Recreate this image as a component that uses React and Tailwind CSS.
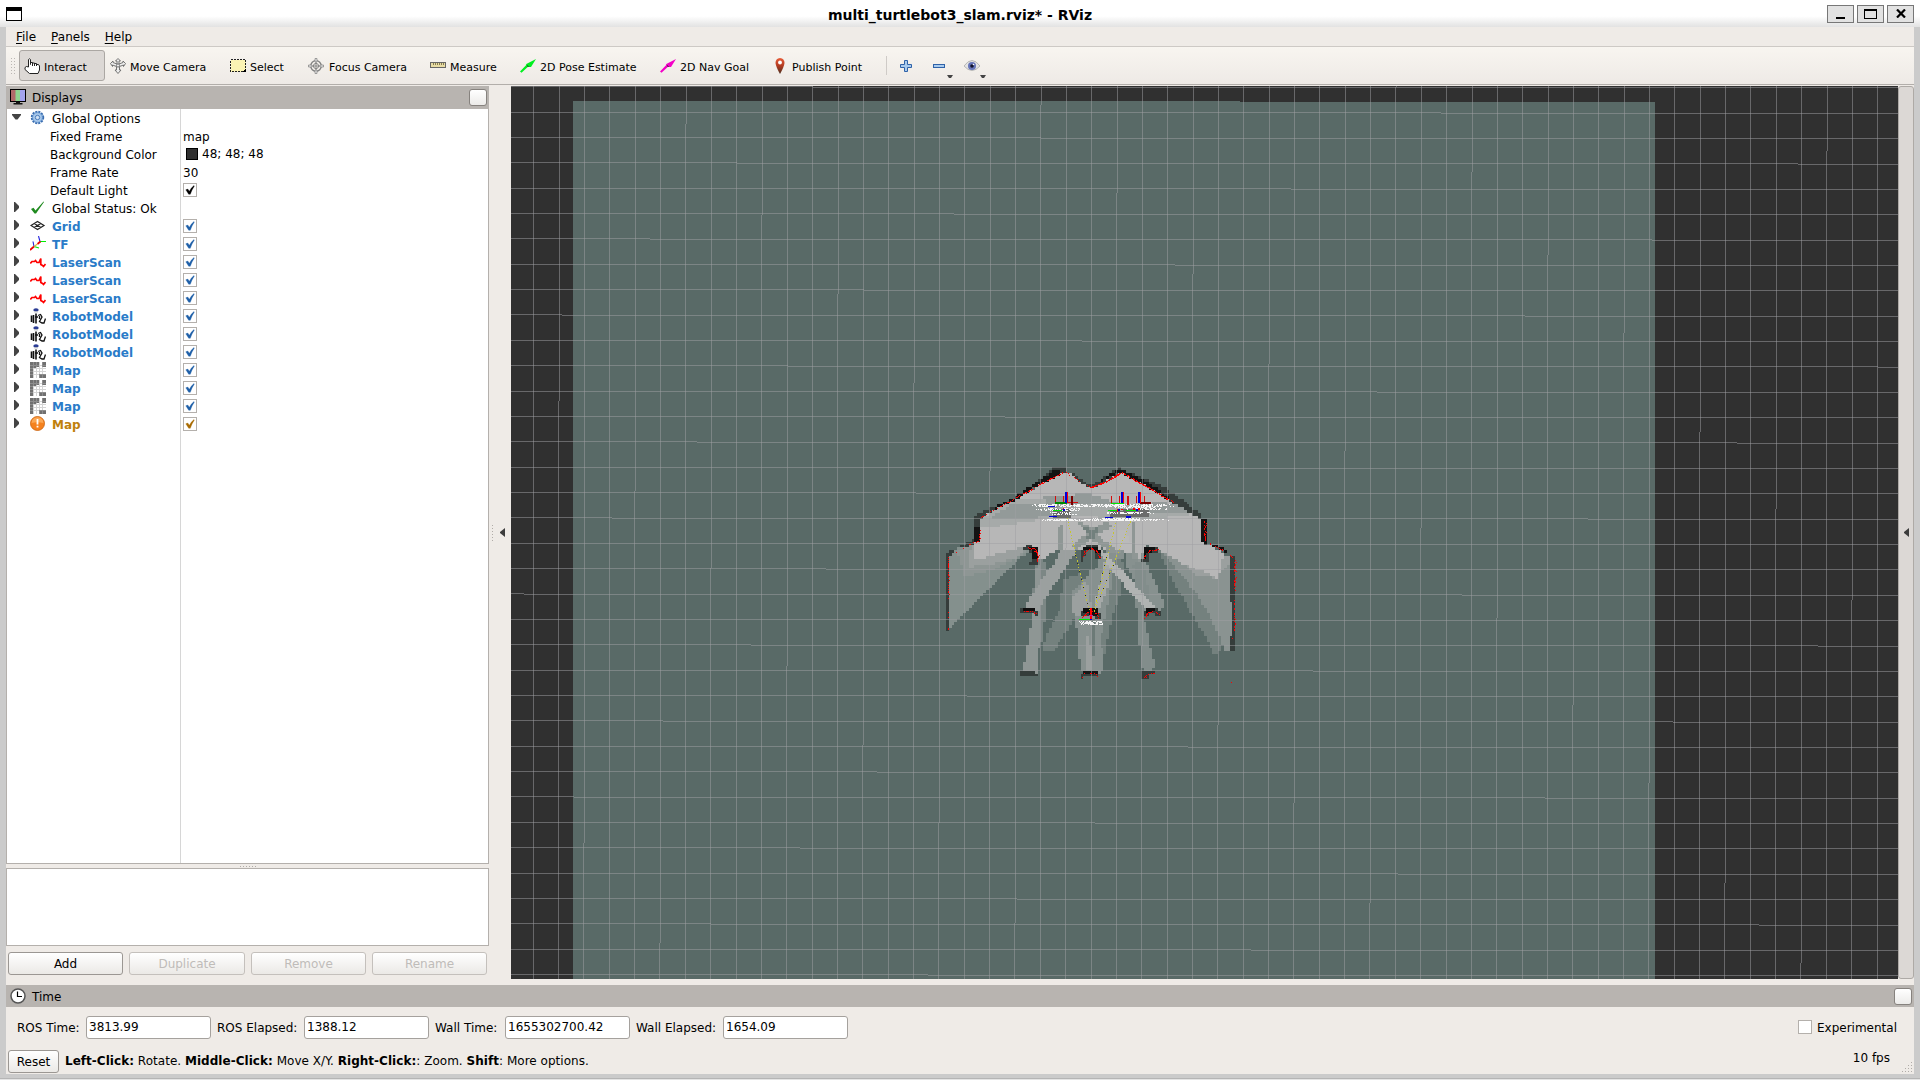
import React from "react";

/* ---------- scene geometry ---------- */

const CELL = 8.6;

function inside(px, py, pts) {
  let hit = false;
  for (let i = 0, j = pts.length - 2; i < pts.length; j = i, i += 2) {
    const xi = pts[i], yi = pts[i + 1], xj = pts[j], yj = pts[j + 1];
    if (yi > py !== yj > py && px < ((xj - xi) * (py - yi)) / (yj - yi) + xi) hit = !hit;
  }
  return hit;
}

// Occupancy cells covered by a polygon, merged into horizontal runs.
function cells(pts) {
  let d = "";
  for (let r = 0; r < 84; r++) {
    let start = -1;
    for (let c = 0; c < 120; c++) {
      const on = c < 119 && inside((c + 0.5) * CELL, (r + 0.5) * CELL, pts);
      if (on && start < 0) start = c;
      if (!on && start >= 0) {
        d += `M${(start * CELL).toFixed(1)} ${(r * CELL).toFixed(1)}h${((c - start) * CELL).toFixed(1)}v${CELL}h${(-(c - start) * CELL).toFixed(1)}z`;
        start = -1;
      }
    }
  }
  return d;
}

function rng(seed) {
  let s = seed * 7919 + 17;
  return () => {
    s = (s * 16807) % 2147483647;
    return s / 2147483647;
  };
}

// Laser hits scattered along a polyline.
function hits(pts, density, seed) {
  const rand = rng(seed);
  let d = "";
  for (let i = 0; i + 3 < pts.length; i += 2) {
    const dx = pts[i + 2] - pts[i], dy = pts[i + 3] - pts[i + 1];
    const n = Math.ceil(Math.hypot(dx, dy) / 3);
    for (let k = 0; k < n; k++) {
      const jitter = rand() < 0.25 ? 3 : 0;
      if (rand() > density) continue;
      const x = Math.round((pts[i] + (dx * k) / n) / 3) * 3 + jitter;
      const y = Math.round((pts[i + 1] + (dy * k) / n) / 3) * 3;
      d += `M${x} ${y}h3v3h-3z`;
    }
  }
  return d;
}

// Overlapping frame labels.
function scribble(x, y, w, h, density, seed) {
  const rand = rng(seed);
  let d = "";
  for (let yy = 0; yy < h; yy += 3)
    for (let xx = 0; xx < w; xx += 3) {
      const edge = Math.min(xx, w - xx) / 70;
      if (rand() < density * Math.min(1, 0.3 + edge)) d += `M${x + xx} ${y + yy}h3v3h-3z`;
    }
  return d;
}

const REGIONS = [
  ["#84908d", [85, 315, 108, 298, 165, 272, 345, 290, 300, 325, 240, 385, 160, 465, 100, 520, 85, 540]],
  ["#8e9694", [112, 305, 165, 275, 330, 290, 300, 320, 215, 362, 135, 382]],
  ["#9ba09f", [150, 300, 165, 275, 320, 292, 290, 322, 215, 342, 150, 350]],
  ["#74817e", [715, 300, 900, 300, 940, 420, 900, 600, 885, 616, 850, 550, 780, 430]],
  ["#8a9391", [730, 310, 940, 318, 940, 600, 915, 600, 890, 540, 830, 430]],
  ["#9ba09f", [760, 320, 905, 310, 940, 330, 915, 352, 890, 385, 830, 375]],
  ["#7c8785", [345, 330, 372, 320, 385, 400, 375, 500, 370, 570, 345, 600, 330, 560, 338, 440]],
  ["#8e9694", [345, 350, 362, 345, 368, 420, 360, 560, 350, 668, 308, 668, 330, 540, 340, 440]],
  ["#9ba09f", [435, 280, 470, 300, 440, 350, 392, 420, 350, 490, 310, 475, 345, 420, 400, 340]],
  ["#74817e", [430, 390, 480, 370, 500, 430, 455, 520, 400, 606, 366, 600, 385, 545, 420, 480]],
  ["#87918f", [455, 430, 500, 380, 560, 300, 610, 300, 600, 380, 568, 520, 545, 670, 480, 665, 470, 540]],
  ["#74817e", [590, 320, 615, 340, 600, 430, 572, 520, 548, 650, 545, 560, 570, 430]],
  ["#9ba09f", [460, 440, 500, 390, 515, 470, 500, 500, 475, 500, 458, 490]],
  ["#a5a9a8", [555, 330, 580, 320, 560, 430, 535, 480, 520, 470]],
  ["#9ba09f", [498, 640, 505, 530, 510, 530, 514, 660, 500, 660]],
  ["#6c7a77", [516, 510, 526, 510, 524, 600, 516, 650]],
  ["#87918f", [615, 280, 650, 280, 690, 360, 735, 470, 705, 490, 660, 420, 620, 350]],
  ["#828d8b", [640, 340, 668, 330, 690, 430, 672, 500, 706, 655, 668, 670, 655, 560]],
  ["#b0b3b2", [535, 300, 560, 310, 650, 410, 708, 475, 690, 482, 655, 458, 590, 380]],
  ["#b7b7b7", [180, 205, 300, 140, 430, 62, 445, 68, 515, 118, 595, 66, 612, 70, 845, 205, 848, 272, 910, 312, 895, 385, 790, 342, 715, 300, 680, 285, 655, 335, 640, 305, 560, 300, 515, 285, 470, 300, 415, 300, 360, 332, 345, 290, 310, 292, 165, 330, 160, 280, 180, 272]],
  ["#a6aaa9", [180, 235, 180, 205, 290, 148, 520, 148, 590, 165, 770, 165, 820, 192, 720, 205, 400, 200, 260, 225]],
  ["#939a99", [210, 200, 275, 165, 420, 165, 390, 200, 240, 208]],
  ["#939a99", [370, 140, 510, 130, 600, 160, 500, 165, 380, 160]],
  ["#939a99", [700, 158, 770, 160, 815, 188, 760, 192, 690, 185]],
  ["#8f9795", [470, 215, 500, 222, 515, 238, 560, 215, 585, 225, 530, 256, 600, 305, 575, 310, 512, 268, 470, 300, 450, 290, 500, 250]],
  ["#72807d", [485, 230, 500, 230, 515, 245, 530, 235, 534, 248, 522, 256, 528, 270, 500, 268, 504, 252]],
  ["#8f9795", [416, 230, 430, 225, 430, 300, 416, 300]],
  ["#8f9795", [632, 215, 642, 215, 648, 305, 660, 335, 640, 325]],
  ["#b7b7b7", [480, 285, 515, 275, 545, 300, 545, 325, 480, 335]],
  ["#596a67", [490, 305, 515, 300, 535, 310, 535, 345, 500, 375, 486, 350]],
  ["#bababa", [590, 245, 618, 240, 640, 300, 628, 310, 600, 300]],
];

const WALLS = [
  ["#353d3b", [160, 272, 160, 200, 195, 180, 250, 160, 300, 130, 350, 95, 400, 55, 432, 52, 445, 62, 420, 72, 350, 108, 270, 155, 180, 205, 178, 272]],
  ["#131313", [164, 272, 164, 232, 178, 232, 178, 272]],
  ["#131313", [180, 206, 250, 158, 280, 142, 360, 90, 410, 58, 428, 58, 420, 72, 350, 108, 290, 148, 215, 185]],
  ["#353d3b", [440, 62, 462, 72, 500, 98, 515, 104, 550, 86, 575, 62, 600, 54, 620, 64, 700, 95, 760, 130, 850, 198, 835, 205, 780, 172, 700, 118, 605, 72, 590, 74, 520, 115, 500, 112]],
  ["#131313", [520, 104, 548, 88, 590, 58, 612, 60, 690, 100, 750, 145, 735, 142, 690, 115, 610, 72, 590, 70, 530, 102]],
  ["#131313", [842, 205, 862, 205, 862, 278, 872, 290, 845, 275]],
  ["#131313", [865, 278, 890, 284, 918, 298, 918, 310, 890, 296]],
  ["#353d3b", [75, 315, 100, 298, 108, 304, 86, 322, 84, 542, 75, 542]],
  ["#353d3b", [118, 290, 160, 270, 176, 272, 130, 298]],
  ["#353d3b", [928, 315, 945, 315, 945, 602, 928, 602, 936, 530]],
  ["#353d3b", [304, 292, 330, 286, 356, 300, 356, 345, 330, 340, 335, 318, 320, 300]],
  ["#101010", [320, 290, 345, 290, 356, 302, 356, 328, 338, 322, 335, 302]],
  ["#353d3b", [480, 335, 482, 300, 500, 286, 530, 288, 544, 312, 542, 330, 530, 325, 518, 298, 500, 303, 490, 335]],
  ["#101010", [490, 306, 492, 290, 528, 289, 538, 305, 530, 310, 515, 298, 500, 300]],
  ["#353d3b", [666, 335, 668, 300, 690, 288, 718, 298, 718, 308, 692, 308, 684, 335]],
  ["#101010", [668, 322, 670, 302, 682, 289, 706, 290, 704, 302, 684, 308, 680, 325]],
  ["#353d3b", [304, 474, 345, 474, 354, 485, 354, 500, 340, 492, 304, 490]],
  ["#101010", [308, 474, 345, 474, 345, 483, 308, 483]],
  ["#353d3b", [480, 505, 480, 486, 492, 474, 528, 474, 540, 490, 540, 508, 528, 506, 520, 498, 490, 500]],
  ["#101010", [488, 474, 536, 474, 538, 492, 528, 500, 490, 490]],
  ["#353d3b", [670, 502, 670, 480, 682, 474, 710, 474, 725, 490, 725, 500, 690, 492]],
  ["#101010", [674, 492, 680, 474, 706, 474, 708, 483, 690, 490]],
  ["#353d3b", [304, 664, 345, 662, 354, 675, 354, 686, 340, 680, 304, 678]],
  ["#353d3b", [480, 684, 482, 670, 500, 660, 528, 664, 538, 676, 536, 686, 520, 678, 490, 684]],
  ["#151818", [490, 662, 534, 662, 534, 673, 490, 673]],
  ["#353d3b", [664, 684, 666, 664, 708, 662, 706, 672, 690, 674, 686, 686]],
];

const RED = [
  hits([180, 202, 210, 184, 270, 152, 345, 108, 432, 64], 0.35, 7),
  hits([265, 156, 345, 110, 425, 68], 0.5, 8),
  hits([434, 64, 470, 88, 512, 112], 0.35, 11),
  hits([512, 112, 560, 92, 602, 66], 1, 13),
  hits([514, 110, 558, 94, 600, 70], 1, 14),
  hits([602, 66, 660, 98, 735, 142, 762, 156], 0.95, 17),
  hits([640, 90, 690, 114, 740, 148], 0.8, 18),
  hits([177, 232, 177, 272, 160, 276, 125, 294, 100, 312], 0.4, 19),
  hits([84, 320, 84, 430], 0.6, 23),
  hits([84, 430, 84, 540], 0.1, 24),
  hits([851, 212, 854, 274, 890, 292, 915, 304], 0.5, 29),
  hits([854, 215, 854, 275], 0.5, 30),
  hits([930, 315, 942, 330, 942, 545], 0.6, 31),
  hits([944, 320, 944, 400], 0.3, 32),
  hits([325, 292, 345, 296, 354, 316, 350, 336], 0.95, 37),
  hits([328, 294, 348, 304, 354, 320], 0.5, 38),
  hits([490, 318, 492, 304, 512, 294, 530, 304, 540, 325], 0.85, 41),
  hits([672, 325, 676, 308, 690, 300, 715, 298], 0.9, 43),
  hits([308, 484, 340, 484, 345, 492], 0.4, 47),
  hits([486, 500, 494, 490, 512, 482, 530, 490, 536, 506], 0.6, 53),
  hits([672, 504, 680, 488, 695, 484, 710, 488, 724, 498], 0.6, 59),
  hits([310, 670, 345, 670], 0.25, 61),
  hits([486, 682, 492, 670, 525, 668, 536, 690], 0.35, 67),
  hits([672, 682, 680, 672, 706, 668], 0.4, 71),
  "M932 696h3v3h-3zM935 564h3v3h-3z",
].join("");

const LABELS = [
  scribble(336, 162, 425, 9, 0.55, 5),
  scribble(420, 164, 90, 6, 0.6, 6),
  scribble(550, 164, 180, 9, 0.5, 9),
  scribble(346, 175, 135, 8, 0.6, 101),
  scribble(600, 175, 140, 6, 0.5, 103),
  scribble(382, 186, 100, 8, 0.55, 105),
  scribble(556, 186, 145, 6, 0.6, 107),
  scribble(346, 206, 400, 6, 0.5, 109),
  scribble(365, 207, 100, 6, 0.5, 111),
  scribble(520, 205, 150, 7, 0.7, 113),
  scribble(476, 512, 70, 10, 1, 115),
].join("");

const GRID_V = Array.from({ length: 54 }, (_, i) => 533.92 + i * 25.356);
const GRID_H = Array.from({ length: 36 }, (_, i) => 87 + i * 25.3676);

function Viewport() {
  return (
    <svg className="block h-[893px] w-[1387px] shrink-0" viewBox="511 86 1387 893" shapeRendering="crispEdges">
      <rect x="511" y="86" width="1387" height="893" fill="#303030" />
      <path d="M573 101H1240V102H1655V979H573Z" fill="#596a67" />
      <g transform="translate(920 450) scale(.33333)">
        {REGIONS.map(([fill, pts], i) => <path key={i} d={cells(pts)} fill={fill} />)}
        {WALLS.map(([fill, pts], i) => <path key={i} d={cells(pts)} fill={fill} />)}
      </g>
      <g stroke="#a0a0a4" strokeOpacity=".5" strokeWidth="1" fill="none">
        {GRID_V.map((x, i) => <path key={i} d={`M${x} 86L${x - 0.714} 979`} />)}
        {GRID_H.map((y, i) => <path key={i} d={`M511 ${y - 0.363}L1188 ${y + 0.456}L1898 ${y + 0.98}`} />)}
      </g>
      <g transform="translate(920 450) scale(.33333)">
        <path d={RED} fill="#f00" />
        <path d="M400 178h52v25h-52zM570 184h116v18h-116zM610 178h76v10h-76z" fill="#6b6b6b" />
        <path d="M441 205 509 485M587 218 521 488M632 214 520 492" stroke="#c6c62c" strokeWidth="3" strokeDasharray="4 6" fill="none" />
        <path d="M465 315 505 470M560 320 528 450M580 345 540 440" stroke="#30301a" strokeWidth="3" strokeDasharray="3 22" fill="none" />
        <path d={LABELS} fill="#f6f6f6" />
        <path d="M405 138h3v22h-3zM429 138h3v22h-3zM573 137h3v25h-3zM597 138h3v22h-3zM647 138h3v22h-3zM672 138h3v24h-3zM621 137h6v28h-6zM440 156h34v3h-34z" fill="#d40c0c" />
        <path d="M453 138h6v26h-6zM660 156h33v5h-33z" fill="#780000" />
        <path d="M405 156h36v5h-36z" fill="#008a00" />
        <path d="M573 159h40v2h-40zM400 180h27v3h-27zM564 180h32v3h-32zM617 180h32v3h-32zM477 507h34v3h-34z" fill="#00e600" />
        <path d="M435 126h6v34h-6zM603 126h6v34h-6zM654 126h6v34h-6zM387 198h24v3h-24zM556 201h22v3h-22zM618 199h14v4h-14zM385 168h20v3h-20zM429 178h6v6h-6zM595 178h6v6h-6zM647 178h6v6h-6zM510 506h6v4h-6z" fill="#0000dc" />
        <path d="M441 126h3v34h-3zM609 126h3v34h-3zM660 126h3v34h-3zM509 474h7v34h-7zM590 178h4v8h-4zM604 176h5v5h-5zM640 174h6v5h-6zM654 174h5v6h-5zM428 173h4v5h-4zM494 494h8v3h-8zM524 488h6v3h-6z" fill="#f00" />
        <path d="M506 494h14v4h-14z" fill="#c0209c" />
      </g>
    </svg>
  );
}

/* ---------- icons ---------- */

const HandIcon = () => (
  <svg className="h-4 w-4 shrink-0" viewBox="0 0 16 16" fill="#fff" stroke="#222" strokeWidth="1">
    <path d="M4.500 9V1.500Q5.500 0 6.500 1.500V6.500V4.500H8.500V7V5H10.500V7V5.500H12.500V7.500V6.500H14.500L15.500 8V12L14 15.500H5.500L1 11.500V9.500L2.500 8.500Z" />
    <path d="M8.500 5V8M10.500 6V8M12.500 6V8" fill="none" />
  </svg>
);
const MoveIcon = () => (
  <svg className="h-4 w-4 shrink-0" viewBox="0 0 16 16" fill="#eee" stroke="#666" strokeWidth=".9">
    <path d="M8 .5 10.500 3H9V6L13 4.500V3L15.500 5.500 13.500 8.500V7L9.500 8.500V12H11L8 15.500 5 12H6.500V8.500L2.500 7V8.500L.5 5.500 3 3V4.500L7 6V3H5.500Z" />
    <circle cx="8" cy="7.500" r="1.600" />
  </svg>
);
const SelectIcon = () => (
  <svg className="h-[13px] w-4 shrink-0" viewBox="0 0 16 13" shapeRendering="crispEdges">
    <rect x=".5" y=".5" width="15" height="12" fill="#fbf3b4" stroke="#222" strokeDasharray="2 1" />
    <path d="M16 9V13H12Z" fill="#000" />
  </svg>
);
const FocusIcon = () => (
  <svg className="h-4 w-4 shrink-0" viewBox="0 0 16 16" fill="none" stroke="#808080" strokeWidth="1">
    <circle cx="8" cy="8" r="5.300" strokeWidth="1.300" />
    <circle cx="8" cy="8" r="2.600" strokeWidth=".9" />
    <path d="M8 4V12M4 8H12" stroke="#777" strokeWidth=".8" />
    <path d="M7 .5H9V4H7ZM7 12H9V15.500H7ZM.5 7H4V9H.5ZM12 7H15.500V9H12Z" fill="#e4e4e4" strokeWidth=".7" />
  </svg>
);
const RulerIcon = () => (
  <svg className="h-[7px] w-4 shrink-0" viewBox="0 0 16 7" shapeRendering="crispEdges">
    <rect x=".5" y=".5" width="15" height="5" fill="#e8dca4" stroke="#666" />
    <path d="M3.500 1V3M5.500 1V3M7.500 1V3M9.500 1V3M11.500 1V3M13.500 1V3" stroke="#857c50" />
  </svg>
);
const PoseIcon = ({ color }) => (
  <svg className="h-[14px] w-4 shrink-0" viewBox="0 0 16 14">
    <path d="M0 12.500 6.500 5.800 5.800 5.200 16 0 11 8 9.300 8 8 7.800 1.500 13.800Z" fill={color} />
    <path d="M6.500 5.500 9.500 8 7.500 7.800Z" fill="#333" />
  </svg>
);
const PinIcon = () => (
  <svg className="h-4 w-[10px] shrink-0" viewBox="0 0 10 16">
    <defs>
      <linearGradient id="pin" x1="0" y1="0" x2="0" y2="1">
        <stop offset="0" stopColor="#e85c38" /><stop offset=".5" stopColor="#b03a20" /><stop offset="1" stopColor="#4c3020" />
      </linearGradient>
    </defs>
    <path d="M5 0Q9.500.3 9.500 5 9 9 5 16 1 9 .5 5 .5.3 5 0Z" fill="url(#pin)" />
    <circle cx="5" cy="4.500" r="1.900" fill="#fff" />
  </svg>
);
const PlusIcon = () => (
  <svg className="h-3 w-3 shrink-0" viewBox="0 0 12 12">
    <path d="M4.500.5H7.500V4.500H11.500V7.500H7.500V11.500H4.500V7.500H.5V4.500H4.500Z" fill="#a9cbee" stroke="#2f62a8" />
  </svg>
);
const MinusIcon = () => (
  <svg className="h-1 w-3 shrink-0" viewBox="0 0 12 4"><rect x=".5" y=".5" width="11" height="3" fill="#a9cbee" stroke="#2f62a8" /></svg>
);
const EyeIcon = () => (
  <svg className="h-3 w-4 shrink-0" viewBox="0 0 16 12">
    <path d="M0 6Q8-5 16 6 8 15 0 6Z" fill="#e4e4e4" stroke="#aaa" strokeWidth=".8" />
    <circle cx="8" cy="6" r="4" fill="#6574b8" /><circle cx="8" cy="6" r="1.800" fill="#10122c" /><circle cx="9.500" cy="4.500" r=".8" fill="#fff" />
  </svg>
);
const DownArrow = () => (
  <svg className="h-[3px] w-[6px]" viewBox="0 0 6 3"><path d="M0 0H6L4 3H2Z" fill="#444" /></svg>
);

const MonitorIcon = () => (
  <svg className="h-4 w-4 shrink-0" viewBox="0 0 16 16">
    <rect x=".5" y=".5" width="15" height="12" fill="#b26a6a" stroke="#000" />
    <rect x="5.500" y="1" width="4.500" height="11" fill="#8fd48f" />
    <rect x="10" y="1" width="5" height="11" fill="#a3a3ee" />
    <path d="M6 12.500H10V14H12.500V15.600H3.500V14H6Z" fill="#111" />
  </svg>
);
const GearIcon = () => (
  <svg viewBox="0 0 16 16" className="h-4 w-4">
    <circle cx="7.500" cy="7.500" r="5.700" fill="#9cc0e6" stroke="#3a6db0" strokeWidth="2" strokeDasharray="2 1" />
    <circle cx="7.500" cy="7.500" r="4.800" fill="#a8c8ea" stroke="#6a98d0" strokeWidth=".8" />
    <circle cx="7.500" cy="7.500" r="2.200" fill="#cfe0f3" stroke="#4a7cbc" strokeWidth="1" />
  </svg>
);
const OkIcon = () => (
  <svg viewBox="0 0 16 16" className="h-4 w-4"><path d="M1 9 3.500 7.800 5.500 10.500 13.500 1.500 14 2 6 13.500 4.500 13.500Z" fill="#1f8a1f" /></svg>
);
const GridIcon = () => (
  <svg viewBox="0 0 16 16" className="h-4 w-4" fill="none" stroke="#222" strokeWidth="1.200">
    <path d="M1 7.500 7.500 3.500 14 7.500 7.500 11.500ZM4.200 5.500 10.800 9.500M10.800 5.500 4.200 9.500" />
  </svg>
);
const TfIcon = () => (
  <svg viewBox="0 0 16 16" className="h-4 w-4" fill="none" strokeWidth="1.100">
    <path d="M10 5.500H16M4 10.500 9 12" stroke="#0e0" /><path d="M8.500 0 10 5.500M3 5.500 4 10.500" stroke="#22d" />
    <path d="M10.500 5.500 7.500 8M4 10.500 0 14" stroke="#e00" strokeWidth="1.700" /><path d="M7.500 8 4 10.500" stroke="#dcae3c" />
  </svg>
);
const ScanIcon = () => (
  <svg viewBox="0 0 16 16" className="h-4 w-4">
    <path d="M.3 9.500 2 7.500H4.500L5.500 6.500 7 8.500H9L10.800 4.500V10.500L12.500 11.500 13.500 12.500 15.500 10" stroke="#f00" strokeWidth="1.700" fill="none" />
  </svg>
);
const RobotIcon = () => (
  <svg viewBox="0 0 16 16" className="h-4 w-4">
    <ellipse cx="6" cy="2" rx="2.700" ry="1.800" fill="#2a3c94" /><path d="M4 3.300H8V4.500H4Z" fill="#ccc" />
    <path d="M1.500 7.500V14M3.500 7V15M6 5.500V15.500M5 9H8" stroke="#111" strokeWidth="1.600" fill="none" />
    <path d="M8 7.500 10.500 6.500 12 9 9.500 13.500 12 15H14L15.500 10.500M9.500 8V11" stroke="#111" strokeWidth="1.300" fill="none" />
  </svg>
);
const MapIcon = () => (
  <svg viewBox="0 0 16 16" className="h-4 w-4" shapeRendering="crispEdges">
    <rect width="16" height="16" fill="#fff" />
    <path d="M0 0H9V5H6V6H3V16H0ZM12 0H16V5H12ZM9 12H16V16H9Z" fill="#707070" />
    <path d="M3.500 0V16M6.500 0V16M9.500 0V16M12.500 0V16M0 3.500H16M0 6.500H16M0 9.500H16M0 12.500H16" stroke="#aaa" strokeOpacity=".5" />
  </svg>
);
const WarnIcon = () => (
  <svg viewBox="0 0 16 16" className="h-4 w-4">
    <circle cx="7.500" cy="7.500" r="7" fill="#f5821f" stroke="#c8600a" strokeWidth=".8" />
    <path d="M1.500 7Q2 1.500 7.500 1.300 13 1.500 13.500 7Q7 5.500 1.500 7Z" fill="#fba855" />
    <path d="M6.600 3H8.400V8.500H6.600ZM6.600 9.800H8.400V11.600H6.600Z" fill="#fff" />
  </svg>
);
const ClockIcon = () => (
  <svg viewBox="0 0 16 16" className="h-4 w-4 shrink-0">
    <circle cx="8" cy="8" r="7" fill="#fff" stroke="#555" strokeWidth="1.500" /><path d="M7.500 3.500V8.500H12" fill="none" stroke="#000" strokeWidth="1.200" />
  </svg>
);

/* ---------- display tree ---------- */

const CheckBox = ({ color }) => (
  <svg className="h-[14px] w-[14px]" viewBox="0 0 14 14">
    <rect x=".5" y=".5" width="13" height="13" fill="#fff" stroke="#b4b0ac" />
    <path d="M2.800 6.800 4.800 6 6.300 8.300Q8.200 4.500 11 2.500L11.300 3.200Q8.900 6.500 7.300 11.300H5.700Z" fill={color} stroke={color} strokeWidth=".3" />
  </svg>
);

const BLUE = "text-[#2a7bc8] font-bold";
const display = (label, icon) => ({ label, icon, arrow: "right", cls: BLUE, check: "#1e5fa8" });
const ROWS = [
  { label: "Global Options", icon: <GearIcon />, arrow: "down" },
  { label: "Fixed Frame", value: "map" },
  { label: "Background Color", value: "48; 48; 48", swatch: true },
  { label: "Frame Rate", value: "30" },
  { label: "Default Light", check: "#000" },
  { label: "Global Status: Ok", icon: <OkIcon />, arrow: "right" },
  display("Grid", <GridIcon />),
  display("TF", <TfIcon />),
  display("LaserScan", <ScanIcon />),
  display("LaserScan", <ScanIcon />),
  display("LaserScan", <ScanIcon />),
  display("RobotModel", <RobotIcon />),
  display("RobotModel", <RobotIcon />),
  display("RobotModel", <RobotIcon />),
  display("Map", <MapIcon />),
  display("Map", <MapIcon />),
  display("Map", <MapIcon />),
  { label: "Map", icon: <WarnIcon />, arrow: "right", cls: "text-[#c0800c] font-bold", check: "#a86a00" },
];

function TreeRow({ row }) {
  return (
    <div className="flex h-[18px] items-center">
      <div className="flex h-full w-[173px] shrink-0 items-center">
        <div className="flex w-[23px] shrink-0 pl-[5px]">
          {row.arrow === "down" && <svg className="mb-[3px] h-[6px] w-[9px]" viewBox="0 0 9 6"><path d="M0 0H9V1L5.500 5.500H3.500L0 1Z" fill="#444" /></svg>}
          {row.arrow === "right" && <svg className="mb-[2px] ml-[2px] h-[10px] w-[5px]" viewBox="0 0 5 10"><path d="M0 0H1L5 4V6L1 10H0Z" fill="#444" /></svg>}
        </div>
        {row.icon ? <div className="mb-px w-[22px] shrink-0">{row.icon}</div> : <div className="w-5 shrink-0" />}
        <span className={`whitespace-nowrap pt-[2px] ${row.cls || ""}`}>{row.label}</span>
      </div>
      <div className="flex h-full grow items-center border-l border-[#d6d6d6] pl-[2px]">
        {row.swatch && <span className="mr-1 ml-[3px] h-3 w-3 border border-black bg-[#303030]" />}
        {row.value && <span className={row.swatch ? "" : "pt-[2px]"}>{row.value}</span>}
        {row.check && <CheckBox color={row.check} />}
      </div>
    </div>
  );
}

function PushButton({ label, width, enabled }) {
  return (
    <div className={`flex h-[23px] items-center justify-center rounded-[3px] border bg-linear-to-b from-white to-[#ebe9e6] pt-px ${width} ${enabled ? "border-[#9b9793] text-black" : "border-[#c4c0bc] text-[#bfbcb9]"}`}>
      {label}
    </div>
  );
}

const DockButton = () => <div className="h-[17px] w-[18px] rounded-[3px] border border-[#86827e] bg-linear-to-b from-white to-[#ecebe9]" />;

function DisplaysPanel() {
  return (
    <div className="flex w-[483px] shrink-0 flex-col">
      <div className="flex h-[23px] items-center bg-[#b8b4b0] pr-[2px] pb-px pl-1">
        <MonitorIcon />
        <span className="grow pt-px pl-[6px]">Displays</span>
        <DockButton />
      </div>
      <div className="flex h-[755px] flex-col border border-t-0 border-[#b4b0ac] bg-white">
        {ROWS.map((row, i) => <TreeRow key={i} row={row} />)}
        <div className="ml-[173px] grow border-l border-[#d6d6d6]" />
      </div>
      <div className="flex h-1 items-center justify-center gap-[2px]">
        {[0, 1, 2, 3, 4, 5].map((i) => <span key={i} className="h-px w-px bg-[#b0aca8]" />)}
      </div>
      <div className="h-[78px] border border-[#b4b0ac] bg-white" />
      <div className="flex justify-between pt-[6px] pr-[2px] pl-[2px]">
        <PushButton label="Add" width="w-[115px]" enabled />
        <PushButton label="Duplicate" width="w-[116px]" />
        <PushButton label="Remove" width="w-[115px]" />
        <PushButton label="Rename" width="w-[115px]" />
      </div>
    </div>
  );
}

/* ---------- chrome ---------- */

function TitleBar() {
  const btn = "flex h-[18px] w-[27px] items-center justify-center border border-[#777] bg-[#e2e2e2]";
  return (
    <div className="flex h-[27px] items-center bg-linear-to-b from-white from-60% to-[#e2e2e2] pr-[6px] pl-[6px]">
      <div className="h-[14px] w-4 border border-t-4 border-black bg-white" />
      <div className="grow pt-[2px] pl-[71px] text-center text-[14px] font-bold leading-none">multi_turtlebot3_slam.rviz* - RViz</div>
      <div className="flex gap-[3px]">
        <div className={btn}><span className="mt-[8px] h-[2px] w-[9px] bg-black" /></div>
        <div className={btn}><span className="h-[10px] w-[13px] border border-t-2 border-black" /></div>
        <div className={btn}><svg className="h-[9px] w-[10px]" viewBox="0 0 10 9"><path d="M1 .5 9 8.500M9 .5 1 8.500" stroke="#000" strokeWidth="2.200" /></svg></div>
      </div>
    </div>
  );
}

const Tool = ({ icon, label, width, gap = "gap-1" }) => (
  <div className={`flex shrink-0 items-center ${gap} ${width}`}>{icon}<span className="whitespace-nowrap pt-[3px]">{label}</span></div>
);

function ToolBar() {
  return (
    <div className="flex h-[38px] items-center border-b border-[#b2aeaa] bg-linear-to-b from-[#f8f5f0] to-[#eeeae6] pl-[5px] text-[11px]">
      <div className="mr-1 grid w-[4px] grid-cols-2 gap-[2px]">
        {Array.from({ length: 12 }, (_, i) => <span key={i} className="h-px w-px bg-[#bbb7b3]" />)}
      </div>
      <div className="flex h-[31px] w-[86px] shrink-0 items-center gap-1 rounded-[3px] border border-[#aba7a3] bg-[#dcd8d5] pl-1">
        <HandIcon /><span className="pt-[3px]">Interact</span>
      </div>
      <Tool icon={<MoveIcon />} label="Move Camera" width="ml-[5px] w-[120px]" />
      <Tool icon={<SelectIcon />} label="Select" width="w-[78px]" />
      <Tool icon={<FocusIcon />} label="Focus Camera" width="w-[122px]" gap="gap-[5px]" />
      <Tool icon={<RulerIcon />} label="Measure" width="w-[90px]" />
      <Tool icon={<PoseIcon color="#00f020" />} label="2D Pose Estimate" width="w-[140px]" />
      <Tool icon={<PoseIcon color="#f400c8" />} label="2D Nav Goal" width="w-[115px]" />
      <Tool icon={<PinIcon />} label="Publish Point" width="w-[111px]" gap="gap-[7px]" />
      <div className="mr-[13px] h-[19px] w-px bg-[#cfcbc7]" />
      <PlusIcon />
      <div className="ml-[21px] flex items-center"><MinusIcon /><span className="mt-[21px] ml-[2px]"><DownArrow /></span></div>
      <div className="ml-[11px] flex items-center"><EyeIcon /><span className="mt-[21px]"><DownArrow /></span></div>
    </div>
  );
}

const Field = ({ label, value, labelW }) => (
  <div className="flex items-center">
    <span className={`shrink-0 whitespace-nowrap pt-px ${labelW}`}>{label}</span>
    <div className="flex h-[23px] w-[125px] items-center rounded-[3px] border border-[#a5a19d] bg-white pb-px pl-[2px]">{value}</div>
  </div>
);

function TimePanel() {
  return (
    <div>
      <div className="mt-[6px] flex h-[22px] items-center bg-[#b8b4b0] pr-[2px] pl-1">
        <ClockIcon />
        <span className="grow pt-px pl-[6px]">Time</span>
        <DockButton />
      </div>
      <div className="flex h-[40px] items-center pl-[11px]">
        <Field label="ROS Time:" value="3813.99" labelW="w-[69px]" />
        <Field label="ROS Elapsed:" value="1388.12" labelW="w-[93px] pl-[6px]" />
        <Field label="Wall Time:" value="1655302700.42" labelW="w-[76px] pl-[6px]" />
        <Field label="Wall Elapsed:" value="1654.09" labelW="w-[93px] pl-[6px]" />
        <div className="grow" />
        <div className="h-[14px] w-[14px] border border-[#b4b0ac] bg-white" />
        <span className="pt-px pr-[17px] pl-[5px]">Experimental</span>
      </div>
      <div className="flex h-[27px] pt-[3px] pl-[2px]">
        <PushButton label="Reset" width="w-[51px] shrink-0" enabled />
        <div className="grow pt-[3px] pl-[6px] leading-4 tracking-[0.03px] whitespace-nowrap"><b>Left-Click:</b> Rotate. <b>Middle-Click:</b> Move X/Y. <b>Right-Click:</b>: Zoom. <b>Shift</b>: More options.</div>
        <span className="pr-[12px] leading-4">10 fps</span>
        <svg className="h-3 w-3 self-end" viewBox="0 0 12 12" fill="#b0aca8" shapeRendering="crispEdges">
          <path d="M9 0h1v1h-1zM6 3h1v1h-1zM9 3h1v1h-1zM3 6h1v1h-1zM6 6h1v1h-1zM9 6h1v1h-1zM0 9h1v1h-1zM3 9h1v1h-1zM6 9h1v1h-1zM9 9h1v1h-1z" />
        </svg>
      </div>
    </div>
  );
}

const LeftArrow = () => <svg className="h-[9px] w-[5px]" viewBox="0 0 5 9"><path d="M5 0V9L0 5V4Z" fill="#3c3c3c" /></svg>;

export default function App() {
  return (
    <div className="flex h-[1080px] w-[1920px] flex-col overflow-hidden bg-[#cbcbcb] font-['DejaVu_Sans',sans-serif] text-[12px] leading-none text-black">
      <TitleBar />
      <div className="mx-[6px] flex h-[1047px] flex-col bg-[#efebe7]">
        <div className="flex h-5 items-center gap-[15px] border-b border-[#cdc9c5] pl-[10px]">
          {["File", "Panels", "Help"].map((m) => (
            <span key={m}><span className="underline underline-offset-2">{m[0]}</span>{m.slice(1)}</span>
          ))}
        </div>
        <ToolBar />
        <div className="flex h-[894px] pt-px">
          <DisplaysPanel />
          <div className="flex w-[22px] shrink-0 items-center">
            <div className="flex w-[11px] flex-col items-end gap-[2px] pr-[7px]">
              {[0, 1, 2, 3, 4, 5].map((i) => <span key={i} className="h-px w-px bg-[#b0aca8]" />)}
            </div>
            <LeftArrow />
          </div>
          <Viewport />
          <div className="flex w-4 shrink-0 items-center justify-center rounded-[3px] border border-[#aeaaa6] bg-[#dcd8d5] pl-[1px]">
            <LeftArrow />
          </div>
        </div>
        <TimePanel />
      </div>
      <div className="mt-1 h-px bg-[#b5b5b5]" />
      <div className="grow bg-[#e4e4e4]" />
    </div>
  );
}
